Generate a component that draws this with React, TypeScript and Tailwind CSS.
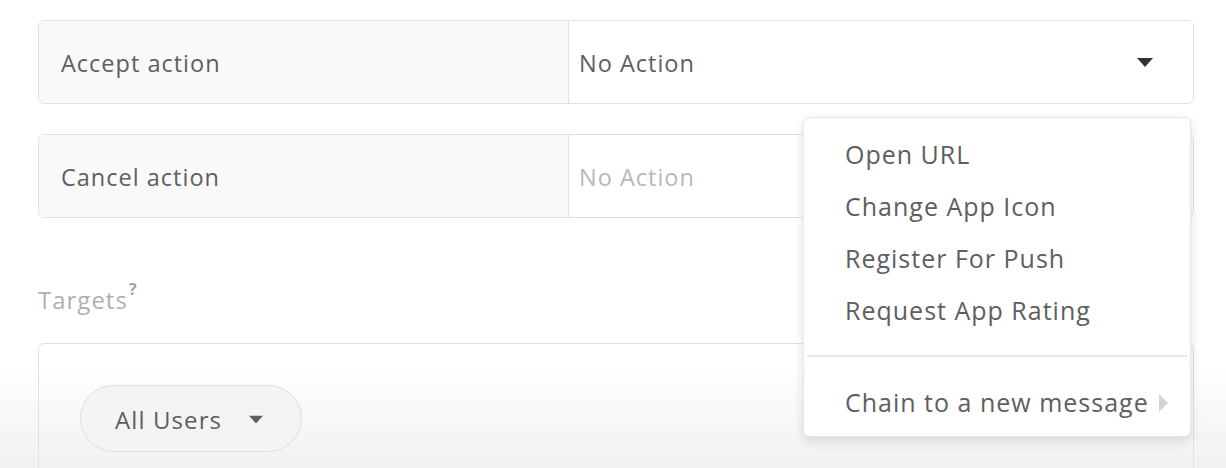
import React from "react";

const font = { fontFamily: "'Open Sans', 'Noto Sans', sans-serif" };

function Caret({ className = "" }: { className?: string }) {
  return (
    <svg width="16" height="9" viewBox="0 0 16 9" className={className}>
      <path d="M0 0h16L8 9z" fill="currentColor" />
    </svg>
  );
}

function ActionRow({
  label,
  value,
  placeholder,
}: {
  label: string;
  value: string;
  placeholder?: boolean;
}) {
  return (
    <div className="flex h-[84px] rounded-md border border-[#e2e2e2] overflow-hidden">
      <div className="w-[530px] shrink-0 bg-[#f9f9f9] border-r border-[#e2e2e2] flex items-center pl-[22px] pt-[3px] text-[23.5px] tracking-[1px] text-[#5e5e61]">
        {label}
      </div>
      <div className="flex-1 flex items-center justify-between pl-[10px] pr-[40px] bg-white">
        <span
          className={
            placeholder
              ? "pt-[3px] text-[23.5px] tracking-[1px] text-[#b8b8b8]"
              : "pt-[3px] text-[23.5px] tracking-[1px] text-[#5e5e61]"
          }
        >
          {value}
        </span>
        {!placeholder && <Caret className="text-[#333]" />}
      </div>
    </div>
  );
}

const menuItems = ["Open URL", "Change App Icon", "Register For Push", "Request App Rating"];

export default function App() {
  return (
    <div
      className="relative h-[468px] w-[1226px] overflow-hidden bg-[linear-gradient(to_bottom,#ffffff_0%,#ffffff_78%,#f1f1f1_100%)]"
      style={font}
    >
      <div className="pl-[38px] pr-[32px] pt-[20px] flex flex-col">
        <ActionRow label="Accept action" value="No Action" />
        <div className="h-[30px]" />
        <ActionRow label="Cancel action" value="No Action" placeholder />

        <div className="mt-[70px] text-[24px] tracking-[1px] text-[#b3afab] leading-none flex items-start">
          Targets
          <span className="text-[16px] font-bold text-[#a5a19d] -mt-[7px] ml-[1px]">?</span>
        </div>

        <div className="mt-[31px] h-[200px] rounded-md border border-[#e0e0e0] pl-[41px] pt-[41px]">
          <div className="inline-flex items-center h-[67px] w-[222px] rounded-full border border-[#dedede] bg-[#f4f4f4] pl-[34px] pt-[2px] text-[24px] tracking-[1.1px] text-[#5e5e61]">
            All Users
            <Caret className="ml-[26px] text-[#5e5e61] scale-90" />
          </div>
        </div>
      </div>

      <div className="absolute left-[803px] top-[117px] w-[388px] rounded-md bg-white border border-[#e6e6e6] shadow-[0_4px_12px_rgba(0,0,0,0.12)] text-[25px] tracking-[1px] text-[#5e5e61]">
        <div className="pt-[11px] pb-[18px]">
          {menuItems.map((m) => (
            <div key={m} className="h-[52px] flex items-center pl-[41px]">
              {m}
            </div>
          ))}
        </div>
        <div className="mx-[3px] border-t-2 border-[#e8e8e8]" />
        <div className="h-[79px] flex items-center pl-[41px] pt-[12px]">
          Chain to a new message
          <svg width="9" height="18" viewBox="0 0 9 18" className="ml-[10px]">
            <path d="M0 0l9 9-9 9z" fill="#d4d4d4" />
          </svg>
        </div>
      </div>
    </div>
  );
}
